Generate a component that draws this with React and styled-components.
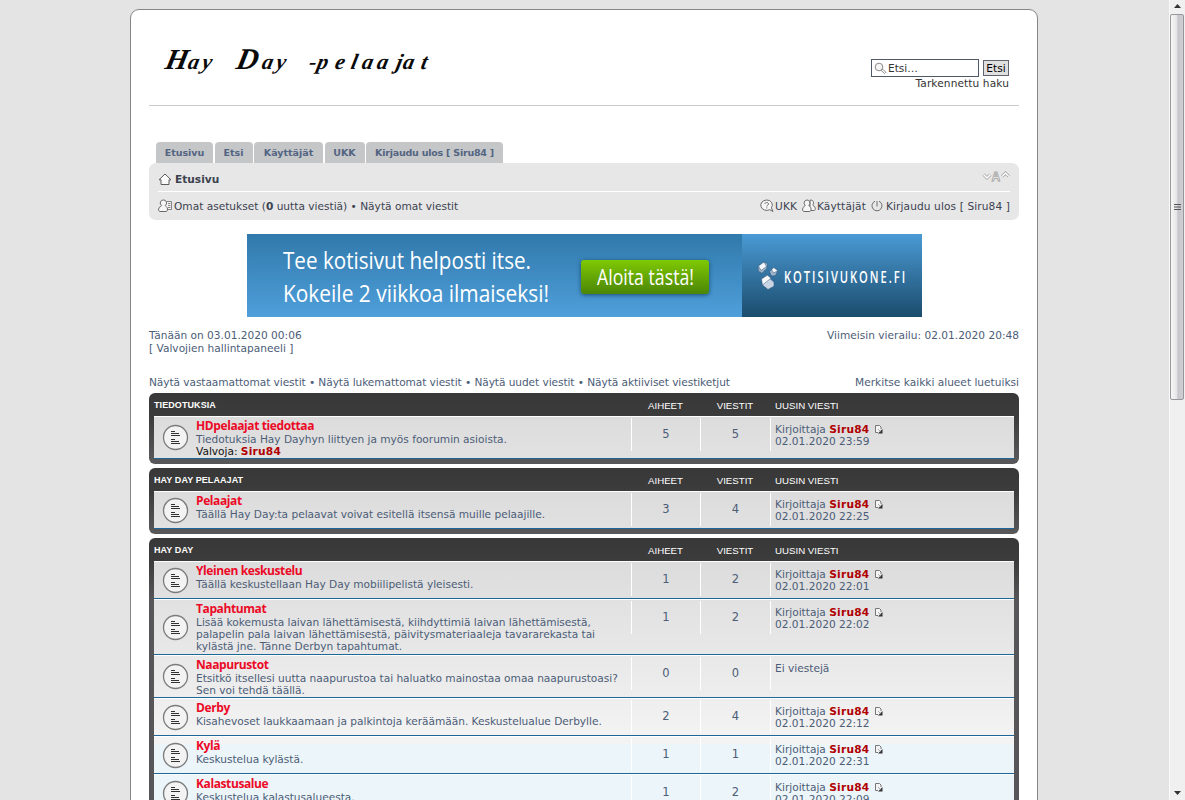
import styled, { createGlobalStyle, css } from "styled-components";

const forums = [
    {
        name: "Tiedotuksia",
        rows: [
            {
                title: "HDpelaajat tiedottaa",
                lines: ["Tiedotuksia Hay Dayhyn liittyen ja myös foorumin asioista."],
                moderator: "Siru84",
                topics: 5,
                posts: 5,
                last: "02.01.2020 23:59",
                height: 43,
            },
        ],
    },
    {
        name: "Hay Day pelaajat",
        rows: [
            {
                title: "Pelaajat",
                lines: ["Täällä Hay Day:ta pelaavat voivat esitellä itsensä muille pelaajille."],
                topics: 3,
                posts: 4,
                last: "02.01.2020 22:25",
                height: 38,
            },
        ],
    },
    {
        name: "Hay Day",
        rows: [
            {
                title: "Yleinen keskustelu",
                lines: ["Täällä keskustellaan Hay Day mobiilipelistä yleisesti."],
                topics: 1,
                posts: 2,
                last: "02.01.2020 22:01",
                height: 38,
            },
            {
                title: "Tapahtumat",
                lines: [
                    "Lisää kokemusta laivan lähettämisestä, kiihdyttimiä laivan lähettämisestä,",
                    "palapelin pala laivan lähettämisestä, päivitysmateriaaleja tavararekasta tai",
                    "kylästä jne. Tänne Derbyn tapahtumat.",
                ],
                topics: 1,
                posts: 2,
                last: "02.01.2020 22:02",
                height: 56,
            },
            {
                title: "Naapurustot",
                lines: [
                    "Etsitkö itsellesi uutta naapurustoa tai haluatko mainostaa omaa naapurustoasi?",
                    "Sen voi tehdä täällä.",
                ],
                topics: 0,
                posts: 0,
                height: 43,
            },
            {
                title: "Derby",
                lines: ["Kisahevoset laukkaamaan ja palkintoja keräämään. Keskustelualue Derbylle."],
                topics: 2,
                posts: 4,
                last: "02.01.2020 22:12",
                height: 38,
            },
            {
                title: "Kylä",
                lines: ["Keskustelua kylästä."],
                topics: 1,
                posts: 1,
                last: "02.01.2020 22:31",
                height: 38,
            },
            {
                title: "Kalastusalue",
                lines: ["Keskustelua kalastusalueesta."],
                topics: 1,
                posts: 2,
                last: "02.01.2020 22:09",
                height: 38,
            },
        ],
    },
];

const tabs = [
    { label: "Etusivu", width: 57 },
    { label: "Etsi", width: 38 },
    { label: "Käyttäjät", width: 69 },
    { label: "UKK", width: 40 },
    { label: "Kirjaudu ulos [ Siru84 ]", width: 137, tight: true },
];

/* ICONS */
const Logo = () => (
    <svg width="290" height="60" viewBox="0 0 290 60" role="img" aria-label="Hay Day -pelaajat">
        <g
            transform="translate(0 29) skewX(-12)"
            fontFamily="'Liberation Serif', serif"
            fontStyle="italic"
            fontWeight="bold"
            fontSize="22"
            fill="#0a0a0a"
        >
            <text fontSize="29" x="3">H</text>
            <text x="26 40">ay</text>
            <text fontSize="30" x="74">D</text>
            <text x="100 114">ay</text>
            <text x="147 155 173 189 200 215 234 241 259">-pelaajat</text>
        </g>
    </svg>
);

const SearchIcon = () => (
    <svg width="13" height="13" viewBox="0 0 13 13" fill="none" stroke="#8a8a8a">
        <circle cx="5" cy="5" r="3.8" fill="#f6f6f6" />
        <path d="M7.8 7.8l1-.6 3 3-1.4 1.4-3-3z" />
    </svg>
);

const HomeIcon = () => (
    <svg width="14" height="13" viewBox="0 0 14 13" fill="#fafafa" stroke="#5c5c5c">
        <path d="M7 1L1 6.8h2v4.7h8V6.8h2z" />
    </svg>
);

const ProfileIcon = () => (
    <svg width="15" height="14" viewBox="0 0 15 14" fill="#f6f6f6" stroke="#6a6a6a">
        <path d="M8.5 2.5h5v8h-5M10 4.5h2.5M10 6.5h2.5M10 8.5h2.5" strokeWidth=".8" />
        <path d="M5.5 1a2.8 3 0 0 1 1.8 5.5c-.3.8 2.2 1 2.2 3.5 0 1.5-.5 2.5-1.5 2.5H2C.9 12.5.6 11.5.6 10c0-2.3 3.2-2.6 3-3.5A3 3 0 0 1 5.5 1z" />
    </svg>
);

const HelpIcon = () => (
    <svg width="14" height="14" viewBox="0 0 14 14" fill="#f6f6f6" stroke="#6a6a6a">
        <path d="M6.6 1a5.5 5 0 0 1 4.8 7.8l1.6 3.7-3.2-1.8A6 5.2 0 1 1 6.6 1z" />
        <path d="M4.9 5c0-2 3.6-2 3.6 0 0 1.2-1.7 1.2-1.7 2.5M6.8 8.4v1" fill="none" />
    </svg>
);

const MembersIcon = () => (
    <svg width="14" height="14" viewBox="0 0 14 14" fill="#f6f6f6" stroke="#6a6a6a">
        <path d="M8 1.2c3-.8 4.6 2.400 2.800 4.600-.3 1 2.500 1.200 2.500 3.800 0 1.500-.5 1.900-1.500 1.900H8z" />
        <path d="M5 1a2.8 3 0 0 1 1.9 5.3c-.3 1 2.2 1.2 2.2 3.7 0 1.7-.5 2.500-1.500 2.500H2C1 12.500.6 11.700.6 10c0-2.500 2.900-2.700 2.600-3.700A3 3 0 0 1 5 1z" />
    </svg>
);

const LogoutIcon = () => (
    <svg width="12" height="12" viewBox="0 0 12 12" fill="none" stroke="#6e6e6e">
        <path d="M4 1.2a5 5 0 1 0 4 0M6 1v5.5" />
    </svg>
);

const FontSizeIcon = () => (
    <svg width="28" height="12" viewBox="0 0 28 12">
        <g fill="none" stroke="#a0a0a0" strokeWidth="3">
            <path d="M1.5 4.500l3.500 3.500L8.500 4.500M20 6.500L23.500 3 27 6.500" />
        </g>
        <g fill="none" stroke="#fff" strokeWidth="1.5">
            <path d="M1.500 4.500l3.500 3.500L8.500 4.500M20 6.500L23.500 3 27 6.500" />
        </g>
        <text x="9.5" y="10.5" fontSize="12" fontWeight="bold" fontFamily="Liberation Sans, sans-serif" fill="#fff" stroke="#a0a0a0" strokeWidth=".8">A</text>
    </svg>
);

const ForumIcon = () => (
    <svg width="27" height="27" viewBox="0 0 27 27" fill="none">
        <circle cx="13.5" cy="13.5" r="12" fill="#f3f3f3" stroke="#7b7b7b" strokeWidth="1.3" />
        <path d="M9 7.5h4M9 9.500h8M9 11.500h9M9 15.500h4M9 17.500h8M9 19.500h9" stroke="#333" />
    </svg>
);

const LatestIcon = () => (
    <svg width="9" height="10" viewBox="0 0 9 10" fill="none">
        <path d="M4 8.500H1.500v-7h4l1.500 1.500v2" stroke="#777" fill="#f4f4f4" />
        <path d="M8.500 5v4.500H4z" fill="#333" />
        <path d="M4 5l2.500 2.500" stroke="#999" strokeWidth=".8" />
    </svg>
);

const CubesIcon = () => (
    <svg width="22" height="30" viewBox="0 0 22 30">
        <g stroke="#2b5577" strokeWidth=".5">
            <path d="M1 5.500L6.500 1l4 1.500-.8 5-4.700 4.700L1.300 10z" fill="#9fb3c8" />
            <path d="M1.500 5L7 1l2.500 4.500L4 9.500z" fill="#f3f7fb" />
            <path d="M12.500 10.500l4.200-4 4 3-2.200 5-4 .5z" fill="#9fb4c9" />
            <path d="M16.700 6.500l4 3-4 2.500-2-3.200z" fill="#f7f9fb" />
            <path d="M4.500 18l5-3.800 7.500 7v4L11 28.500 5.500 24z" fill="#c9d4e4" />
            <path d="M4.500 18l6-3.800 3.500 3-6 4.800-2.500 2z" fill="#f8fafc" />
        </g>
    </svg>
);

function Forum({ forum }) {
    return (
        <ForumBlock>
            <ForumHeader>
                <strong>{forum.name}</strong>
                <HeadCell>Aiheet</HeadCell>
                <HeadCell>Viestit</HeadCell>
                <HeadCell $left>Uusin viesti</HeadCell>
            </ForumHeader>
            <TopicList>
                {forum.rows.map((row) => (
                    <Row key={row.title} $height={row.height}>
                        <IconCell><ForumIcon /></IconCell>
                        <Description>
                            <ForumTitle href="#">{row.title}</ForumTitle>
                            {row.lines.map((line) => <p key={line}>{line}</p>)}
                            {row.moderator && (
                                <Moderator>Valvoja: <User>{row.moderator}</User></Moderator>
                            )}
                        </Description>
                        <Count>{row.topics}</Count>
                        <Count>{row.posts}</Count>
                        <LastPost>
                            {row.last ? (
                                <>
                                    <span>Kirjoittaja <User>Siru84</User> <LatestIcon /></span>
                                    <span>{row.last}</span>
                                </>
                            ) : (
                                <span>Ei viestejä</span>
                            )}
                        </LastPost>
                    </Row>
                ))}
            </TopicList>
        </ForumBlock>
    );
}

function App() {
    return (
        <Screen>
            <GlobalStyle />
            <Viewport>
                <Wrap>
                    {/* HEADER */}
                    <Header>
                        <Logo />
                        <Search>
                            <div>
                                <SearchInput><SearchIcon /><span>Etsi…</span></SearchInput>
                                <SearchButton>Etsi</SearchButton>
                            </div>
                            <a href="#">Tarkennettu haku</a>
                        </Search>
                    </Header>

                    {/* NAVIGATION */}
                    <Tabs>
                        {tabs.map((tab) => (
                            <Tab key={tab.label} $width={tab.width} $tight={tab.tight}>{tab.label}</Tab>
                        ))}
                    </Tabs>
                    <Navbar>
                        <NavRow $first>
                            <NavItem $bold><HomeIcon />Etusivu</NavItem>
                            <FontSizeIcon />
                        </NavRow>
                        <NavRow>
                            <NavItem>
                                <ProfileIcon />
                                <span>Omat asetukset (<b>0</b> uutta viestiä) • Näytä omat viestit</span>
                            </NavItem>
                            <NavLinks>
                                <NavItem><HelpIcon />UKK</NavItem>
                                <NavItem><MembersIcon />Käyttäjät</NavItem>
                                <NavItem $gap><LogoutIcon />Kirjaudu ulos [ Siru84 ]</NavItem>
                            </NavLinks>
                        </NavRow>
                    </Navbar>

                    {/* BANNER */}
                    <Banner>
                        <BannerLeft>
                            <svg width="334" height="83">
                                <text x="36" y="35" textLength="248" lengthAdjust="spacingAndGlyphs">Tee kotisivut helposti itse.</text>
                                <text x="36" y="68" textLength="266" lengthAdjust="spacingAndGlyphs">Kokeile 2 viikkoa ilmaiseksi!</text>
                            </svg>
                            <BannerButton>
                                <svg width="128" height="34">
                                    <text x="16" y="25" textLength="97" lengthAdjust="spacingAndGlyphs">Aloita tästä!</text>
                                </svg>
                            </BannerButton>
                        </BannerLeft>
                        <BannerRight>
                            <CubesIcon />
                            <svg width="132" height="26">
                                <text x="0" y="20" textLength="123" lengthAdjust="spacingAndGlyphs">KOTISIVUKONE.FI</text>
                            </svg>
                        </BannerRight>
                    </Banner>

                    {/* INFO LINES */}
                    <InfoLine>
                        <span>Tänään on 03.01.2020 00:06<br />[ Valvojien hallintapaneeli ]</span>
                        <span>Viimeisin vierailu: 02.01.2020 20:48</span>
                    </InfoLine>
                    <InfoLine $links>
                        <span>Näytä vastaamattomat viestit • Näytä lukemattomat viestit • Näytä uudet viestit • Näytä aktiiviset viestiketjut</span>
                        <span>Merkitse kaikki alueet luetuiksi</span>
                    </InfoLine>

                    {forums.map((forum) => <Forum key={forum.name} forum={forum} />)}
                </Wrap>
            </Viewport>
            <Scrollbar>
                <svg width="7" height="4"><path d="M0 4L3.5 0 7 4z" fill="#333" /></svg>
                <Thumb>
                    <svg width="7" height="8"><path d="M0 1.5h7M0 4h7M0 6.5h7" stroke="#555" /></svg>
                </Thumb>
                <Track />
                <svg width="7" height="4"><path d="M0 0h7L3.5 4z" fill="#333" /></svg>
            </Scrollbar>
        </Screen>
    );
}

const GlobalStyle = createGlobalStyle`
    * {
        box-sizing: border-box;
    }
    body {
        margin: 0;
        overflow: hidden;
        background: #e4e4e4;
        font-family: Verdana, "DejaVu Sans", sans-serif;
        font-size: 10.6px;
        line-height: 12px;
        color: #4c5d77;
    }
    svg {
        display: block;
        flex: none;
    }
    p {
        margin: 0;
    }
    a {
        color: inherit;
        text-decoration: none;
    }
`;

const Screen = styled.div`
    display: flex;
    height: 800px;
    overflow: hidden;
`;

const Viewport = styled.main`
    width: 1169px;
    padding: 9px 0 0 130px;
    overflow: hidden;
`;

const Wrap = styled.div`
    width: 908px;
    min-height: 900px;
    padding: 0 18px;
    border: 1px solid #85858a;
    border-radius: 9px;
    background: #fff;
    white-space: nowrap;
`;

const Header = styled.header`
    display: flex;
    justify-content: space-between;
    height: 96px;
    padding: 30px 10px 0 12px;
    border-bottom: 1px solid #cccccc;
`;

const Search = styled.div`
    display: flex;
    flex-direction: column;
    align-items: flex-end;
    padding-top: 19px;
    color: #333;
    > div {
        display: flex;
        align-items: center;
        gap: 4px;
    }
    a {
        letter-spacing: .1px;
    }
`;

const SearchInput = styled.div`
    display: flex;
    align-items: center;
    width: 108px;
    height: 18px;
    padding-left: 2px;
    border: 1px solid #4f5a68;
    background: #fff;
    span {
        margin-left: 1px;
    }
`;

const SearchButton = styled.button`
    width: 26px;
    height: 16px;
    padding: 0;
    border: 1px solid #5f6470;
    background: #e0e0e0;
    font: inherit;
    line-height: 13px;
    color: #000;
`;

const Tabs = styled.nav`
    display: flex;
    gap: 1.5px;
    margin-top: 36px;
    padding-left: 7px;
`;

const Tab = styled.a`
    width: ${(props) => props.$width}px;
    height: 21px;
    border-radius: 4px 4px 0 0;
    background: #c4c6c8;
    color: #536482;
    font-size: 9.5px;
    font-weight: bold;
    letter-spacing: ${(props) => (props.$tight ? "-.22px" : "0")};
    line-height: 22px;
    text-align: center;
`;

const Navbar = styled.div`
    height: 57px;
    padding: 0 9px;
    border-radius: 7px;
    background: #e7e7e7;
    color: #3c4250;
`;

const NavRow = styled.div`
    display: flex;
    align-items: center;
    justify-content: space-between;
    height: 27px;
    ${(props) => props.$first && css`
        height: 29px;
        padding-top: 4px;
        border-bottom: 1px solid #fff;
        > svg {
            margin-bottom: 7px;
        }
    `}
`;

const NavItem = styled.span`
    display: flex;
    align-items: center;
    gap: ${(props) => (props.$bold || props.$gap ? 3 : 1)}px;
    font-weight: ${(props) => (props.$bold ? "bold" : "normal")};
`;

const NavLinks = styled.div`
    display: flex;
    gap: 5px;
    letter-spacing: .11px;
`;

const Banner = styled.div`
    display: flex;
    width: 675px;
    height: 83px;
    margin: 14px 0 0 98px;
`;

const BannerLeft = styled.div`
    display: flex;
    align-items: center;
    width: 495px;
    background: linear-gradient(#3079ab, #4f9fdb);
    text {
        font: 400 24px "Open Sans", sans-serif;
        fill: #fff;
    }
`;

const BannerButton = styled.div`
    height: 34px;
    margin-top: 3px;
    border-radius: 3px;
    background: linear-gradient(#7fc904, #4b8506);
    box-shadow: 0 1px 4px rgba(0, 30, 60, .6);
    text {
        font-size: 21px;
        font-weight: 500;
    }
`;

const BannerRight = styled.div`
    display: flex;
    align-items: center;
    gap: 5px;
    width: 180px;
    padding-left: 15px;
    background: linear-gradient(#4a9ad4, #1b4c6d);
    text {
        font: 600 17px "Open Sans", sans-serif;
        letter-spacing: 3px;
        fill: #fff;
    }
`;

const InfoLine = styled.div`
    display: flex;
    justify-content: space-between;
    margin-top: ${(props) => (props.$links ? 21 : 12)}px;
    margin-bottom: ${(props) => (props.$links ? 5 : 0)}px;
    line-height: ${(props) => (props.$links ? 12 : 13)}px;
    ${(props) => props.$links && css`
        span:first-child {
            letter-spacing: -.07px;
        }
    `}
`;

const ForumBlock = styled.section`
    margin-bottom: 4px;
    padding: 0 5px 5px;
    border-radius: 6px;
    background: linear-gradient(#383838, #3c3c3c 24px, #57575a 64px, #57575a);
`;

const ForumHeader = styled.div`
    display: grid;
    grid-template-columns: 477px 69px 70px 1fr;
    height: 23px;
    line-height: 25px;
    color: #fff;
    font-family: Arial, "Liberation Sans", sans-serif;
    font-size: 9px;
    text-transform: uppercase;
    strong {
        letter-spacing: .08px;
    }
`;

const HeadCell = styled.span`
    padding-left: ${(props) => (props.$left ? 5 : 0)}px;
    font-size: 9.7px;
    text-align: ${(props) => (props.$left ? "left" : "center")};
`;

const TopicList = styled.div`
    background: #ecf5f9 linear-gradient(#dcdcdc, #f4f4f4) 0 0 / 100% 183px no-repeat;
`;

const Row = styled.div`
    display: grid;
    grid-template-columns: 42px 435px 69px 70px 1fr;
    height: ${(props) => props.$height}px;
    border-top: 1px solid #fff;
    border-bottom: 1px solid #1d6799;
`;

const IconCell = styled.div`
    display: flex;
    align-items: center;
    padding-left: 8px;
`;

const Description = styled.div`
    padding-top: 2px;
    p {
        letter-spacing: -.02px;
    }
`;

const ForumTitle = styled.a`
    display: block;
    height: 14px;
    color: #ec0a26;
    font: 700 12px/14px "Open Sans", sans-serif;
    letter-spacing: -.4px;
`;

const Moderator = styled.p`
    color: #111;
`;

const User = styled.b`
    color: #b00000;
    letter-spacing: .25px;
`;

const Count = styled.span`
    height: 33px;
    margin-top: 1px;
    border-left: 1px solid #fff;
    font-size: 11.5px;
    line-height: 33px;
    text-align: center;
`;

const LastPost = styled.div`
    display: flex;
    flex-direction: column;
    height: 33px;
    margin-top: 1px;
    padding: 5px 0 0 4px;
    border-left: 1px solid #fff;
    svg {
        display: inline-block;
        margin-left: 1px;
        vertical-align: -1px;
    }
`;

const Scrollbar = styled.aside`
    display: flex;
    flex-direction: column;
    align-items: center;
    width: 16px;
    padding: 4px 0 5px;
    border-left: 1px solid #fafafa;
    background: #f0f0f0;
`;

const Thumb = styled.div`
    display: flex;
    align-items: center;
    align-self: flex-start;
    justify-content: center;
    width: 14px;
    height: 386px;
    margin-top: 6px;
    border: 1px solid #97979b;
    border-radius: 2px;
    background: linear-gradient(90deg, #f7f7f7, #e6e6e8 45%, #c6c6cc 60%, #d0d0d4);
`;

const Track = styled.div`
    flex: 1;
`;

export default App;
